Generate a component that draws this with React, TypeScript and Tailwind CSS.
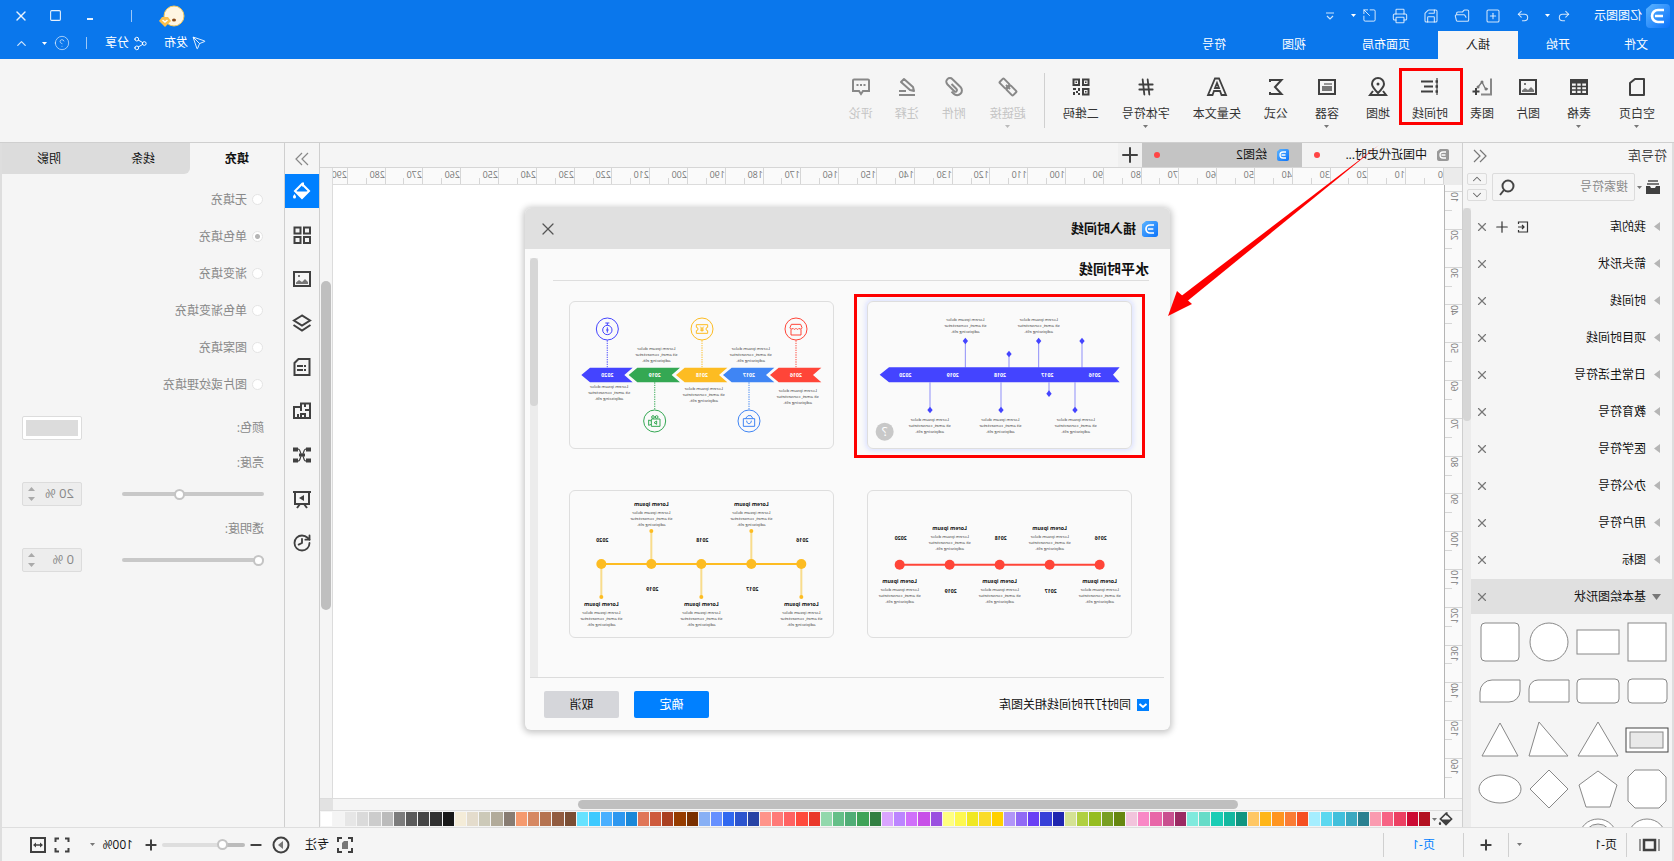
import { ReactNode } from 'react';
import { clsx } from 'clsx';
import {
  ChevronDown,
  ChevronUp,
  CircleHelp,
  FolderOpen,
  Hash,
  History,
  Minus,
  Plus,
  Printer,
  Redo2,
  Save,
  Send,
  Share2,
  Square,
  SquareArrowOutUpRight,
  SquarePlus,
  Undo2,
  X,
} from 'lucide-react';

interface IconProps {
  children: ReactNode;
  size?: string;
  viewBox?: string;
}

function Icon({ children, size = 'size-5', viewBox = '0 0 20 20' }: IconProps) {
  return (
    <svg
      className={size}
      viewBox={viewBox}
      fill="none"
      stroke="currentColor"
      strokeWidth="2"
      aria-hidden="true"
    >
      {children}
    </svg>
  );
}

function Caret({ className = 'text-[#777]' }: { className?: string }) {
  return (
    <svg className={clsx('h-[3px] w-[5px] shrink-0', className)} viewBox="0 0 5 3" fill="currentColor" aria-hidden="true">
      <path d="M0 0h5L2.5 3z" />
    </svg>
  );
}

function BrandMark({ tone, size }: { tone: 'blue' | 'gray'; size: string }) {
  return (
    <svg className={clsx('shrink-0', size)} viewBox="0 0 24 24" aria-hidden="true">
      <defs>
        <linearGradient id="brand" x1="1" y1="0" x2="0" y2="1">
          <stop offset="0" stopColor="#5cb4ff" />
          <stop offset="1" stopColor="#0a72fa" />
        </linearGradient>
      </defs>
      <path
        d="M4 0h14l6 5v15a4 4 0 0 1-4 4H4a4 4 0 0 1-4-4V4a4 4 0 0 1 4-4z"
        fill={tone === 'blue' ? 'url(#brand)' : '#989898'}
      />
      <path d="M6 6h6a6 6 0 0 1 0 12H6M7 12h8" fill="none" stroke="#fff" strokeWidth="2.6" />
    </svg>
  );
}

const DoubleChevron = ({ back }: { back?: boolean }) => (
  <Icon size="size-[14px]" viewBox="0 0 14 14">
    <path
      d={back ? 'M7 1L1 7l6 6M13 1L7 7l6 6' : 'M7 1l6 6-6 6M1 1l6 6-6 6'}
      strokeWidth="1.2"
    />
  </Icon>
);

const BucketIcon = ({ size = 'size-5' }: { size?: string }) => (
  <Icon size={size}>
    <path d="M9 1.5v4M3 10l7-7 7 7-7 7z" />
    <path d="M3 10.5h14l-7 7z" fill="currentColor" stroke="none" />
    <path d="M17.5 13c1 1.500 1.500 2 1.500 3a1.500 1.500 0 0 1-3 0c0-1 .5-1.500 1.500-3z" fill="currentColor" stroke="none" />
  </Icon>
);

const PictureIcon = () => (
  <Icon>
    <rect x="2" y="3" width="16" height="14" />
    <path d="M4 15v-2l3-3 3 3 3-2 3 2.500V15z" fill="#777" stroke="none" />
    <path d="M12 6h2v2h-2z" fill="#777" stroke="none" />
  </Icon>
);

// ---------------------------------------------------------------- title bar

const MENU_TABS = ['文件', '开始', '插入', '页面布局', '视图', '符号'];

function TitleBar() {
  return (
    <header className="flex h-[59px] shrink-0 justify-between bg-[#0a77ec] text-white">
      <div className="flex flex-col justify-between">
        <div className="flex h-[31px] items-center gap-1 pl-1">
          <BrandMark tone="blue" size="size-6" />
          <span className="mr-[19px]">亿图图示</span>
          <div className="flex items-center gap-[15px] text-white/80">
            <button className="flex items-center gap-[7px]" aria-label="撤销">
              <Undo2 size={14} strokeWidth={1.8} />
              <Caret className="text-white" />
            </button>
            <button aria-label="重做"><Redo2 size={14} strokeWidth={1.8} /></button>
            <button aria-label="新建"><SquarePlus size={16} strokeWidth={1.6} /></button>
            <button aria-label="打开"><FolderOpen size={16} strokeWidth={1.6} /></button>
            <button aria-label="保存"><Save size={16} strokeWidth={1.6} /></button>
            <button aria-label="打印"><Printer size={16} strokeWidth={1.6} /></button>
            <button className="flex items-center gap-[6px]" aria-label="导出">
              <SquareArrowOutUpRight size={15} strokeWidth={1.6} />
              <Caret className="text-white" />
            </button>
            <button aria-label="更多">
              <Icon size="size-3" viewBox="0 0 12 12">
                <path d="M2 3h8M3 6l3 3 3-3" strokeWidth="1.2" />
              </Icon>
            </button>
          </div>
        </div>
        <nav className="flex h-7">
          {MENU_TABS.map((tab) => (
            <button
              key={tab}
              className={clsx('px-7 first:px-[26px]', tab === '插入' && 'bg-[#f5f5f5] text-[#222]')}
            >
              {tab}
            </button>
          ))}
        </nav>
      </div>

      <div className="flex flex-col items-end">
        <div className="flex h-[31px] items-center pr-[13px] text-white/90">
          <svg className="mr-[26px] h-[22px] w-7" viewBox="0 0 28 22" aria-label="用户">
            <circle cx="12" cy="11" r="10" fill="#fff6e2" stroke="#f6c95c" />
            <ellipse cx="12" cy="15" rx="2" ry="1.5" fill="#8a4b1a" />
            <path d="M18 12h6l3 4-6 6-6-6z" fill="#fdc04b" />
            <path d="M18.5 15l2.500 2 2.500-2" fill="none" stroke="#fff" strokeWidth="1.5" />
          </svg>
          <span className="mr-[35px] h-3 w-px bg-white/60" />
          <button className="mr-[22px]" aria-label="最小化">
            <Icon size="size-3" viewBox="0 0 12 12"><path d="M3 9h6" /></Icon>
          </button>
          <button className="mr-5" aria-label="最大化">
            <Square size={13} strokeWidth={2} />
          </button>
          <button aria-label="关闭"><X size={16} strokeWidth={2} /></button>
        </div>
        <div className="flex h-6 items-center pr-[14px]">
          <button className="mr-4 flex items-center gap-1"><Send size={14} strokeWidth={1.5} />发布</button>
          <button className="mr-[18px] flex items-center gap-1"><Share2 size={15} strokeWidth={1.5} />分享</button>
          <span className="mr-4 h-3 w-px bg-white/60" />
          <button className="mr-[13px] flex items-center gap-[7px] text-white/60" aria-label="帮助">
            <CircleHelp size={16} strokeWidth={1.5} />
            <Caret className="text-white" />
          </button>
          <button className="text-white/80" aria-label="收起功能区"><ChevronUp size={15} strokeWidth={2} /></button>
        </div>
      </div>
    </header>
  );
}

// ------------------------------------------------------------------- ribbon

interface RibbonItem {
  label: string;
  icon: ReactNode;
  pad: string;
  menu?: boolean;
  marked?: boolean;
}

const RIBBON: RibbonItem[] = [
  {
    label: '空白页',
    pad: 'px-3',
    menu: true,
    icon: <Icon><path d="M3 2h9l5 4v12H3z" strokeLinejoin="round" /></Icon>,
  },
  {
    label: '表格',
    pad: 'px-4',
    menu: true,
    icon: (
      <Icon>
        <rect x="2" y="3" width="16" height="14" />
        <path d="M2 5h16" strokeWidth="3" />
        <path d="M2 9.5h16M2 13h16M7.5 6v11M12.5 6v11" strokeWidth="1.5" />
      </Icon>
    ),
  },
  { label: '图片', pad: 'px-[11px]', icon: <PictureIcon /> },
  {
    label: '图表',
    pad: 'px-[11px]',
    icon: (
      <Icon>
        <path d="M1 1.5v16h10" stroke="#888" />
        <path d="M4 12l3-1 3-6 4 5" strokeWidth="1.3" stroke="#777" />
        <circle cx="6" cy="12" r="1.5" fill="#777" stroke="none" />
        <circle cx="10" cy="5" r="1.5" fill="#777" stroke="none" />
        <circle cx="14" cy="10" r="1.5" fill="#777" stroke="none" />
        <path d="M16 11v7M12.5 14.5h7" />
      </Icon>
    ),
  },
  {
    label: '时间线',
    pad: 'px-[11px]',
    marked: true,
    icon: (
      <Icon>
        <path d="M3 1v17" strokeWidth="1.2" />
        <path d="M2 4.5h2.500M2 9.5h2.500M2 14.5h2.500" strokeWidth="2.5" />
        <path d="M7 4.5h12M7 9.5h9M7 14.5h12" />
      </Icon>
    ),
  },
  {
    label: '地图',
    pad: 'px-[11px]',
    icon: (
      <Icon>
        <path d="M10 16C6 12 4 10 4 7a6 6 0 0 1 12 0c0 3-2 5-6 9z" />
        <circle cx="10" cy="7" r="1.5" fill="currentColor" stroke="none" />
        <path d="M5 14l-3 4h16l-3-4" />
      </Icon>
    ),
  },
  {
    label: '容器',
    pad: 'px-4',
    menu: true,
    icon: (
      <Icon>
        <rect x="2" y="3" width="16" height="14" />
        <path d="M5 9h10v5H5z" fill="#777" stroke="none" />
        <path d="M5 7h8" stroke="#777" strokeWidth="1.5" />
      </Icon>
    ),
  },
  {
    label: '公式',
    pad: 'px-[11px]',
    icon: (
      <Icon>
        <path d="M16 5V3H4.500l6.500 7-6.500 7H16v-2" />
      </Icon>
    ),
  },
  {
    label: '矢量文本',
    pad: 'px-3',
    icon: (
      <Icon size="h-5 w-[22px]" viewBox="0 0 22 20">
        <path d="M9 1.5h4l7 16.500h-4.500l-1.500-4H8l-1.500 4H2zM11 6l-2 5h4z" strokeWidth="1.8" />
      </Icon>
    ),
  },
  { label: '字体符号', pad: 'px-[11px]', menu: true, icon: <Hash size={20} strokeWidth={2.2} /> },
  {
    label: '二维码',
    pad: 'px-3',
    icon: (
      <Icon>
        <path d="M2.5 2.5h5.500v5.500H2.500zM12 2.5h5.500v5.500H12zM2.5 12h5.500v5.500H2.500z" />
        <path
          d="M4.5 4.5h1.500V6H4.500zM14 4.5h1.500V6H14zM4.5 14h1.500v1.500H4.500zM11 11h2v3h-2zM15 11h3v2h-3zM13 14h2v2h-2zM11 16h2v2h-2zM16 15h2v3h-2z"
          fill="currentColor"
          stroke="none"
        />
      </Icon>
    ),
  },
];

const RIBBON_DISABLED: RibbonItem[] = [
  {
    label: '超链接',
    pad: 'px-3',
    menu: true,
    icon: (
      <Icon>
        <rect x="-4.5" y="-3" width="9" height="6" rx="1" transform="translate(6.5 13.5) rotate(-45)" />
        <rect x="-4.5" y="-3" width="9" height="6" rx="1" transform="translate(13.5 6.5) rotate(-45)" />
        <path d="M8 12l4-4" />
      </Icon>
    ),
  },
  {
    label: '附件',
    pad: 'px-3',
    icon: (
      <Icon>
        <path d="M12.5 7l-5 5a1.500 1.500 0 0 0 2.200 2.200l7-7a3.600 3.600 0 0 0-5.200-5L3.500 10a4.800 4.800 0 0 0 6.800 6.800l2.200-2.200" />
      </Icon>
    ),
  },
  {
    label: '注释',
    pad: 'px-[11px]',
    icon: (
      <Icon>
        <path d="M3 14l1-4 9-8 3 3-9 8zM2 18h16M11 14h7" strokeLinejoin="round" />
      </Icon>
    ),
  },
  {
    label: '评论',
    pad: 'px-[11px]',
    icon: (
      <Icon>
        <path d="M3 2.5h14a1 1 0 0 1 1 1V14h-6l-2 3-2-3H2V3.500a1 1 0 0 1 1-1z" />
        <path d="M5.5 8h2M9 8h2M12.5 8h2" />
      </Icon>
    ),
  },
];

function RibbonButton({ item, disabled }: { item: RibbonItem; disabled?: boolean }) {
  return (
    <button
      disabled={disabled}
      className={clsx(
        'relative flex flex-col items-center pt-[18px]',
        item.pad,
        disabled ? 'text-[#888]' : 'text-[#404040]'
      )}
    >
      {item.icon}
      <span className={clsx('mt-2 leading-[18px]', disabled ? 'text-[#c4c4c4]' : 'text-[#333]')}>{item.label}</span>
      {item.menu && <Caret className={clsx('mt-0.5', disabled ? 'text-[#bbb]' : 'text-[#777]')} />}
      {item.marked && <span className="absolute -right-0.5 -left-1 top-[9px] h-[57px] border-3 border-[#fe0000]" />}
    </button>
  );
}

function Ribbon() {
  return (
    <div className="flex h-[84px] shrink-0 items-stretch border-b border-[#cfcfcf] bg-[#f5f5f5] pl-[7px]">
      {RIBBON.map((item) => (
        <RibbonButton key={item.label} item={item} />
      ))}
      <span className="mx-1.5 my-3.5 w-px bg-[#d0d0d0]" />
      {RIBBON_DISABLED.map((item) => (
        <RibbonButton key={item.label} item={item} disabled />
      ))}
    </div>
  );
}

// ------------------------------------------------------------ symbol library

const LIBRARIES = [
  '我的库', '箭头形状', '时间线', '项目时间线', '日常生活符号',
  '教育符号', '医学符号', '办公符号', '用户符号', '图标',
];

// every shape is drawn in a 46 x 46 box
const SHAPES: ReactNode[] = [
  <rect x="4" y="4" width="38" height="38" />,
  <rect x="2" y="11" width="42" height="24" />,
  <circle cx="23" cy="23" r="19" />,
  <rect x="4" y="4" width="38" height="38" rx="4" />,
  <rect x="3" y="11" width="39" height="24" rx="4" />,
  <rect x="2" y="11" width="42" height="24" rx="4" />,
  <path d="M3 12h31a9 9 0 0 1 9 9v13H3z" />,
  <path d="M3 12h28a12 12 0 0 1 12 12v10H14A11 11 0 0 1 3 23z" />,
  <>
    <rect x="2" y="11" width="42" height="24" stroke="#444" />
    <rect x="7" y="15" width="33" height="16" fill="#e9e9e9" />
  </>,
  <path d="M23 5l20 34H3z" />,
  <path d="M33 5l10 34H4z" />,
  <path d="M23 6l18 33H5z" />,
  <path d="M11 4h24l7 7v24l-7 7H11l-7-7V11z" />,
  <path d="M23 5l19 14-7 22H11L4 19z" />,
  <path d="M23 4l19 19-19 19L4 23z" />,
  <ellipse cx="23" cy="23" rx="21" ry="14" />,
  <circle cx="23" cy="23" r="19" />,
  <>
    <circle cx="23" cy="23" r="19" />
    <circle cx="23" cy="23" r="14" fill="#e9e9e9" />
  </>,
];

function SymbolPanel() {
  return (
    <aside className="flex w-[210px] shrink-0 flex-col border-r border-[#cfcfcf]">
      <div className="flex h-[26px] items-center justify-between pr-2.5 pl-[5px] text-[13px] text-[#444]">
        符号库
        <button className="text-[#777]" aria-label="收起符号库"><DoubleChevron back /></button>
      </div>
      <div className="flex items-center pt-1 pr-1 pl-3">
        <button className="flex items-center gap-1 text-[#404040]" aria-label="符号库菜单">
          <Icon size="size-[14px]" viewBox="0 0 14 14">
            <path d="M2 1h10M1 4h12" stroke="#777" />
            <path d="M0 6h4l1 2h4l1-2h4v8H0z" fill="currentColor" stroke="none" />
          </Icon>
          <Caret />
        </button>
        <label className="mr-[5px] ml-0.5 flex h-7 flex-1 items-center rounded-xs border border-[#dcdcdc] px-1.5">
          <input className="w-0 flex-1 outline-none placeholder:text-[#8a8a8a]" placeholder="搜索符号" aria-label="搜索符号" />
          <Icon size="size-[17px]" viewBox="0 0 17 17">
            <g stroke="#444"><circle cx="8" cy="7" r="5.5" /><path d="M12 11l4 5" /></g>
          </Icon>
        </label>
        <div className="flex flex-col gap-1 text-[#666]">
          <button className="flex h-3 w-5 items-center justify-center rounded-xs border border-[#dcdcdc]" aria-label="上一个">
            <ChevronUp size={14} strokeWidth={1.8} />
          </button>
          <button className="flex h-3 w-5 items-center justify-center rounded-xs border border-[#dcdcdc]" aria-label="下一个">
            <ChevronDown size={14} strokeWidth={1.8} />
          </button>
        </div>
      </div>

      <div className="mt-[7px] flex min-h-0 flex-1">
        <div className="min-w-0 flex-1 overflow-hidden">
          <ul>
            {LIBRARIES.map((name) => (
              <li key={name} className="flex h-[37px] items-center pr-1 pl-3 text-[#111]">
                <svg className="mr-2 h-[9px] w-1.5" viewBox="0 0 6 9" fill="#b5b5b5" aria-hidden="true">
                  <path d="M0 0l6 4.500L0 9z" />
                </svg>
                <span className="flex-1">{name}</span>
                {name === '我的库' && (
                  <span className="flex items-center gap-1.5 pr-1 text-[#333]">
                    <button aria-label="导入">
                      <Icon size="size-3" viewBox="0 0 12 12">
                        <path d="M10.5 3V1h-9v10h9V9M11 6H5M7 4L5 6l2 2" strokeWidth="1.2" />
                      </Icon>
                    </button>
                    <button aria-label="添加"><Plus size={18} strokeWidth={1.6} /></button>
                  </span>
                )}
                <button className="text-[#777]" aria-label={'关闭' + name}><X size={14} strokeWidth={2} /></button>
              </li>
            ))}
          </ul>
          <div className="mt-px flex h-[35px] items-center bg-[#e0e0e0] pr-1 pl-[11px] text-[#111]">
            <svg className="mr-1.5 h-1.5 w-[9px]" viewBox="0 0 9 6" fill="#777" aria-hidden="true">
              <path d="M0 0h9L4.500 6z" />
            </svg>
            <span className="flex-1">基本绘图形状</span>
            <button className="text-[#777]" aria-label="关闭基本绘图形状"><X size={14} strokeWidth={2} /></button>
          </div>
          <div className="grid grid-cols-4 pt-[5px] pr-1">
            {SHAPES.map((shape, i) => (
              <svg key={i} className="mx-auto mb-[3px] size-[46px]" viewBox="0 0 46 46" fill="#fff" stroke="#888">
                {shape}
              </svg>
            ))}
          </div>
        </div>
        <div className="w-2 shrink-0 bg-[#ececec]">
          <div className="h-[213px] rounded-full bg-[#d6d6d6]" />
        </div>
      </div>
    </aside>
  );
}

// ------------------------------------------------------------------- canvas

const RULER_STEP = 37.8;

function TopRuler() {
  return (
    <svg className="h-[17px] min-w-0 flex-1 border-b border-[#dcdcdc] bg-[#fafafa] text-[9px]" aria-hidden="true">
      {Array.from({ length: 30 }, (_, i) => {
        const x = Math.round(i * RULER_STEP);
        const half = Math.round((i + 0.5) * RULER_STEP);
        return (
          <g key={i}>
            <path d={`M${x + 0.5} 0v17M${half + 0.5} 10v7`} stroke="#d6d6d6" />
            <text x={x + 1} y="10" fill="#777">{i * 10}</text>
          </g>
        );
      })}
    </svg>
  );
}

function SideRuler() {
  return (
    <svg className="w-[18px] shrink-0 border-r border-[#b5b5b5] bg-[#fafafa] text-[9px]" aria-hidden="true">
      {Array.from({ length: 16 }, (_, i) => {
        const y = 6 + Math.round(i * RULER_STEP);
        const half = 6 + Math.round((i + 0.5) * RULER_STEP);
        return (
          <g key={i}>
            <path d={`M0 ${y + 0.5}h18M10 ${half + 0.5}h8`} stroke="#d6d6d6" />
            <text textAnchor="end" transform={`translate(11 ${y + 1}) rotate(-90)`} fill="#777">
              {(i + 1) * 10}
            </text>
          </g>
        );
      })}
    </svg>
  );
}

const PALETTE = [
  '#b31020', '#cc0a33', '#ec4062', '#f76384', '#fa9bb0',
  '#2a8090', '#3aa8c0', '#42c0dc', '#5cd8f0', '#a5eeff',
  '#f55022', '#fa7c35', '#ff9520', '#ffb618', '#ffc764',
  '#109580', '#14b8a0', '#1acdb5', '#66dcc8', '#80eadd',
  '#9b2a62', '#c9508f', '#e866a8', '#f988c6', '#f2c4dc',
  '#66870f', '#789f22', '#95bd20', '#b0d040', '#d4e294',
  '#1f26b0', '#3740d8', '#6a40f5', '#916af5', '#b195f8',
  '#ffd000', '#fadc2a', '#f0e823', '#fdf850', '#ffff80',
  '#9a50e0', '#c850e8', '#d070fa', '#bc85ff', '#daa5ff',
  '#328042', '#3fa358', '#50ad76', '#65bf88', '#92d8ac',
  '#ea382a', '#ff4a3c', '#ff6262', '#ff7a78', '#ff948a',
  '#2843a5', '#2c54ce', '#3068f0', '#6690ff', '#88b0f5',
  '#7a3000', '#963c00', '#aa4022', '#ce5a3c', '#e07658',
  '#1a88d8', '#2e98f0', '#4ab0ff', '#3ecaff', '#66e2ff',
  '#7a4e34', '#925c40', '#b57350', '#d68862', '#f59a6e',
  '#887c72', '#b2ab9a', '#ccc9b8', '#e4dccc', '#f4ecd8',
  '#181818', '#303030', '#454545', '#5a5a5a', '#7c7c7c', '#bbbbbb',
  '#cccccc', '#dadada', '#e6e6e6', '#f4f4f4', '#ffffff',
];

function Workspace() {
  return (
    <main className="relative flex min-w-0 flex-1 flex-col">
      <div className="flex h-[25px] shrink-0 border-b border-[#d6d6d6] text-[#111]">
        <button className="flex w-40 items-center bg-[#f3f3f3] pr-3 pl-[13px]">
          <BrandMark tone="gray" size="size-3" />
          <span className="ml-2.5 flex-1 text-left">中国近代史时...</span>
          <span className="size-1.5 rounded-full bg-[#ff4545]" />
        </button>
        <button className="flex w-40 items-center bg-[#c4c4c4] pr-3 pl-[13px]">
          <BrandMark tone="blue" size="size-3" />
          <span className="ml-2.5 flex-1 text-left">绘图2</span>
          <span className="size-1.5 rounded-full bg-[#ff4545]" />
        </button>
        <button className="flex w-6 items-center justify-center bg-[#f0f0f0] text-[#404040]" aria-label="新建页签">
          <Plus size={24} strokeWidth={2} />
        </button>
      </div>

      <div className="flex min-h-0 flex-1">
        <div className="flex min-w-0 flex-1 flex-col">
          <div className="flex h-[17px] shrink-0">
            <div className="w-[18px] bg-[#ebebeb]" />
            <TopRuler />
          </div>
          <div className="flex min-h-0 flex-1">
            <SideRuler />
            <div className="flex-1 bg-white" />
          </div>
        </div>
        <div className="w-[13px] shrink-0 border-l border-[#dcdcdc] px-px pt-[113px]">
          <div className="h-[329px] rounded-full bg-[#bfbfbf]" />
        </div>
      </div>

      <div className="flex h-[13px] shrink-0 border-y border-[#dcdcdc]">
        <div className="flex-1 py-px pl-[224px]">
          <div className="h-[9px] w-[660px] rounded-full bg-[#bfbfbf]" />
        </div>
        <div className="w-[13px] bg-[#e2e2e2]" />
      </div>

      <div className="flex h-4 shrink-0 items-center pl-2 text-[#404040]">
        <button className="mr-px flex w-[23px] items-center gap-px" aria-label="填充颜色">
          <BucketIcon size="size-4" />
          <Caret />
        </button>
        <div className="flex flex-1 gap-px">
          {PALETTE.map((color) => (
            <span key={color} className="h-[14px] flex-1" style={{ backgroundColor: color }} />
          ))}
        </div>
      </div>

      <TimelineDialog />

      {/* callout arrow from the ribbon item to the dialog */}
      <svg className="pointer-events-none absolute top-0 left-[82px] h-[180px] w-[214px]" viewBox="0 0 214 180" fill="#fe0000" aria-hidden="true">
        <path d="M188 161l24 12-9-25z" />
        <path d="M1 2l194 158 5-6z" />
      </svg>
    </main>
  );
}

// ------------------------------------------------------------ timeline dialog

const YEARS = ['2016', '2017', '2018', '2019', '2020'];

function Lorem({ x, y, title }: { x: number; y: number; title?: boolean }) {
  return (
    <g textAnchor="middle" fill="#333" fontSize="13">
      {title && (
        <text x={x} y={y - 20} fontSize="16" fontWeight="700" fill="#111">Lorem ipsum</text>
      )}
      <text x={x} y={y + 4}>Lorem ipsum dolor</text>
      <text x={x} y={y + 22}>sit amet, consectetur</text>
      <text x={x} y={y + 40}>adipiscing elit.</text>
    </g>
  );
}

function Stem({ x, from, to }: { x: number; from: number; to: number }) {
  return (
    <g fill="#4444ff">
      <path d={`M${x} ${from}V${to}`} stroke="#8f8ff8" strokeWidth="3" />
      <path d={`M${x} ${to - 10}l8 10-8 10-8-10z`} />
    </g>
  );
}

function ArrowTimeline() {
  return (
    <svg viewBox="0 0 795 444" aria-hidden="true">
      <Stem x={150} from={200} to={120} />
      <Stem x={280} from={200} to={120} />
      <Stem x={369} from={200} to={159} />
      <Stem x={500} from={200} to={120} />
      <Stem x={171} from={244} to={327} />
      <Stem x={249} from={244} to={278} />
      <Stem x={393} from={244} to={327} />
      <Stem x={606} from={244} to={327} />
      <path d="M37 199h692l28 22-28 23H37l20-23z" fill="#4444ff" />
      {YEARS.map((year, i) => (
        <text key={year} x={112 + i * 142} y="228" fontSize="16" fontWeight="700" fill="#fff" textAnchor="middle">
          {year}
        </text>
      ))}
      <Lorem x={280} y={56} />
      <Lorem x={500} y={56} />
      <Lorem x={169} y={356} />
      <Lorem x={395} y={356} />
      <Lorem x={607} y={356} />
      <circle cx="742" cy="392" r="27" fill="#c8c8c8" />
      <text x="742" y="406" fontSize="40" fill="#fff" textAnchor="middle">?</text>
    </svg>
  );
}

const RIBBON_STEPS = [
  { x: 38, color: '#ff4538', up: true, textY: 268 },
  { x: 179, color: '#3f85f4', up: false, textY: 142 },
  { x: 320, color: '#fdbc22', up: true, textY: 262 },
  { x: 462, color: '#34a853', up: false, textY: 142 },
  { x: 604, color: '#4444ff', up: true, textY: 258 },
];

// drawn round the centre of the badge
const BADGES = [
  <path d="M-14-14h28l4 10c0 4-6 6-9 2-3 4-6 4-9 0-3 4-6 4-9 0-3 4-9 2-9-2zM-15 1v17h30V1" />,
  <path d="M-17-7h34v23h-34zM-12-7l6-9h9l8 9M-7-1c0 12 14 12 14 0" />,
  <path d="M-17-13h34v8a5 5 0 0 0 0 10v8h-34V5a5 5 0 0 0 0-10zM-5-7l5 6 5-6M0-1V8M-5 0H5M-5 4H5" />,
  <path d="M-16-6h26v22h-26zM10 0l8-3v16l-8-3M-10-12a4 4 0 1 0 8 0 4 4 0 1 0-8 0M1-12a4 4 0 1 0 8 0 4 4 0 1 0-8 0M-6 0l8 5-8 5z" />,
  <path d="M-14 3a14 14 0 1 0 28 0 14 14 0 1 0-28 0M-6-18H6M0-18v7M0-5v16M-4 3H4" />,
];

function ChevronTimeline() {
  return (
    <svg viewBox="0 0 795 444" aria-hidden="true">
      {RIBBON_STEPS.map((step, i) => {
        const cx = step.x + 76;
        const cy = step.up ? 84 : 360;
        return (
          <g key={step.color}>
            <path
              d={step.up ? `M${cx} 118V200` : `M${cx} 244v82`}
              stroke={step.color}
              strokeWidth="4"
              strokeDasharray="4 3"
              opacity="0.7"
            />
            <g fill="none" stroke={step.color} strokeWidth="3" transform={`translate(${cx} ${cy})`}>
              <circle r="33" />
              {BADGES[i]}
            </g>
            <path d={`M${step.x} 200h128l26 22-26 22H${step.x}l25-22z`} fill={step.color} />
            <text x={cx} y="228" fontSize="16" fontWeight="700" fill="#fff" textAnchor="middle">{YEARS[i]}</text>
            <Lorem x={cx - 5} y={step.textY} />
          </g>
        );
      })}
    </svg>
  );
}

function DotTimeline() {
  return (
    <svg viewBox="0 0 795 444" aria-hidden="true">
      <path d="M97 224h600" stroke="#ff4538" strokeWidth="6" />
      {YEARS.map((year, i) => {
        const x = 97 + i * 150;
        const below = i % 2 === 0;
        return (
          <g key={year}>
            <circle cx={x} cy="224" r="15" fill="#ff4538" />
            <text x={x - 3} y={below ? 149 : 308} fontSize="16" fontWeight="700" fill="#111" textAnchor="middle">{year}</text>
            <Lorem x={x} y={below ? 298 : 139} title />
          </g>
        );
      })}
    </svg>
  );
}

function StemTimeline() {
  return (
    <svg viewBox="0 0 795 444" aria-hidden="true">
      <path d="M98 222h600" stroke="#fdbc22" strokeWidth="6" />
      {YEARS.map((year, i) => {
        const x = 98 + i * 150;
        const below = i % 2 === 0;
        const end = below ? 321 : 123;
        return (
          <g key={year}>
            <path d={`M${x} 222V${end}`} stroke="#f8dc8c" strokeWidth="6" />
            <circle cx={x} cy={end} r="6" fill="#fdbc22" />
            <circle cx={x} cy="222" r="15" fill="#fdbc22" />
            <text x={x - 3} y={below ? 155 : 302} fontSize="16" fontWeight="700" fill="#111" textAnchor="middle">{year}</text>
            <Lorem x={x} y={below ? 369 : 69} title />
          </g>
        );
      })}
    </svg>
  );
}

function TimelineDialog() {
  const card = 'h-[148px] rounded-md bg-[#fafafa] outline outline-1 -outline-offset-1 outline-[#dedede]';
  return (
    <section
      role="dialog"
      aria-label="插入时间线"
      className="absolute top-[65px] left-[292px] flex w-[645px] flex-col overflow-hidden rounded-md bg-[#fafafa] text-[#111] shadow-[0_1px_6px_2px_#00000038]"
    >
      <div className="flex h-[41px] items-center bg-[#e0e0e0] pr-[13px] pl-3">
        <BrandMark tone="blue" size="size-4" />
        <h2 className="ml-1.5 flex-1 text-[13px] font-bold">插入时间线</h2>
        <button className="text-[#555]" aria-label="关闭"><X size={20} strokeWidth={1.5} /></button>
      </div>

      <div className="mr-[5px] ml-1.5 flex border-b border-[#dcdcdc] pt-[9px]">
        <div className="flex-1 pr-[15px] pl-[15px]">
          <h3 className="border-b border-[#dedede] text-[14px] leading-[22px] font-bold">水平时间线</h3>
          <div className="grid grid-cols-2 gap-x-[33px] gap-y-[41px] pt-5 pr-4 pb-[39px] pl-[17px]">
            <button className={clsx(card, 'relative shadow-[0_0_4px_2px_#dfe4ff]')} aria-label="箭头时间线">
              <ArrowTimeline />
              <span className="absolute -inset-x-[13px] -top-[7px] -bottom-[9px] border-3 border-[#fe0000]" />
            </button>
            <button className={card} aria-label="彩带时间线"><ChevronTimeline /></button>
            <button className={card} aria-label="圆点时间线"><DotTimeline /></button>
            <button className={card} aria-label="分支时间线"><StemTimeline /></button>
          </div>
        </div>
        <div className="w-2 bg-[#ececec]">
          <div className="h-[148px] rounded-full bg-[#d6d6d6]" />
        </div>
      </div>

      <div className="flex h-[52px] items-center pt-px pr-[19px] pl-[21px]">
        <label className="flex flex-1 items-center gap-1.5">
          <span className="grid size-3">
            <input type="checkbox" defaultChecked className="col-start-1 row-start-1 size-3 appearance-none bg-[#0080ff]" />
            <svg className="pointer-events-none col-start-1 row-start-1 size-3" viewBox="0 0 12 12" fill="none" stroke="#fff" strokeWidth="2">
              <path d="M2.5 5l3.500 3 3.500-3" />
            </svg>
          </span>
          同时打开时间线相关图库
        </label>
        <button className="mr-[15px] h-[27px] w-[75px] rounded-xs bg-[#0080ff] text-white">确定</button>
        <button className="h-[27px] w-[75px] rounded-xs bg-[#d5d6da]">取消</button>
      </div>
    </section>
  );
}

// --------------------------------------------------------------- right panels

const TOOL_ICONS: { label: string; icon: ReactNode }[] = [
  { label: '填充', icon: <BucketIcon /> },
  {
    label: '符号',
    icon: (
      <Icon>
        <path d="M2 2.5h6v6H2zM11.5 2.5h6v6h-6zM2 12h6v6H2zM11.5 12h6v6h-6z" />
      </Icon>
    ),
  },
  { label: '图片', icon: <PictureIcon /> },
  {
    label: '图层',
    icon: (
      <Icon>
        <path d="M10 2.5l8 5-8 5-8-5zM1.5 12l8.500 5.500 8.500-5.500" />
      </Icon>
    ),
  },
  {
    label: '页面',
    icon: (
      <Icon>
        <path d="M2.5 2h11l4 4v12h-15zM6 9h2M6 13h2M9 9h6M9 13h6" />
      </Icon>
    ),
  },
  {
    label: '平面图',
    icon: (
      <Icon>
        <path d="M2 2.5h9v3.500h7v11H2z" />
        <path d="M7 3v3M2 9h5M11 6v4M7 16v-3h4v4M14 16v-3" />
      </Icon>
    ),
  },
  {
    label: '思维导图',
    icon: (
      <Icon>
        <path d="M3 4h3c3 0 2 6 4 6s1-6 4-6h3M3 16h3c3 0 2-6 4-6s1 6 4 6h3" strokeWidth="1.2" />
        <path d="M1 2.5h5v4H1zM14 2.5h5v4h-5zM1 13.5h5v4H1zM14 13.5h5v4h-5zM7 8.5h6v3H7z" fill="currentColor" stroke="none" />
      </Icon>
    ),
  },
  {
    label: '演示',
    icon: (
      <Icon>
        <path d="M1 3h18M3 3v12h14V3M8 15l-3 4M12 15l3 4" />
        <path d="M8 6l5 3-5 3z" fill="currentColor" stroke="none" />
      </Icon>
    ),
  },
  { label: '历史', icon: <History size={20} strokeWidth={2.2} /> },
];

function ToolStrip() {
  return (
    <aside className="flex w-9 shrink-0 flex-col items-center border-x border-[#cfcfcf] text-[#404040]">
      <button className="flex h-[31px] items-center text-[#888]" aria-label="收起面板">
        <DoubleChevron />
      </button>
      <div className="flex flex-col gap-2.5">
        {TOOL_ICONS.map((tool, i) => (
          <button
            key={tool.label}
            aria-label={tool.label}
            className={clsx('flex size-[34px] items-center justify-center', i === 0 && 'bg-[#0080ff] text-white')}
          >
            {tool.icon}
          </button>
        ))}
      </div>
    </aside>
  );
}

const FILL_MODES = ['无填充', '单色填充', '渐变填充', '单色渐变填充', '图案填充', '图片或纹理填充'];

const RANGE =
  'h-1 appearance-none rounded-full [&::-webkit-slider-thumb]:size-[11px] [&::-webkit-slider-thumb]:appearance-none [&::-webkit-slider-thumb]:rounded-full [&::-webkit-slider-thumb]:border-2 [&::-webkit-slider-thumb]:border-[#c4c4c4] [&::-webkit-slider-thumb]:bg-white';

function SliderRow({ id, label, value, text }: { id: string; label: string; value: number; text: string }) {
  return (
    <div>
      <label htmlFor={id} className="block leading-5">{label}</label>
      <div className="mt-[9px] flex items-center justify-between">
        <input id={id} type="range" defaultValue={value} className={clsx(RANGE, 'w-[142px] bg-[#c8c8c8]')} />
        <div className="flex h-6 w-[60px] items-center rounded-xs border border-[#dcdcdc] bg-[#ededed] pr-[5px] pl-[7px]">
          <input className="w-0 flex-1 text-[13px] outline-none" defaultValue={text} aria-label={label} />
          <span className="flex flex-col gap-1.5 text-[#aaa]">
            <button aria-label="增加">
              <svg className="block h-1 w-[7px]" viewBox="0 0 7 4" fill="currentColor"><path d="M0 4h7L3.500 0z" /></svg>
            </button>
            <button aria-label="减少">
              <svg className="block h-1 w-[7px]" viewBox="0 0 7 4" fill="currentColor"><path d="M0 0h7L3.500 4z" /></svg>
            </button>
          </span>
        </div>
      </div>
    </div>
  );
}

function FillPanel() {
  return (
    <aside className="w-[282px] shrink-0 text-[#888]">
      <div className="grid h-[31px] grid-cols-3 text-[#111]">
        <button className="font-bold">填充</button>
        <div className="col-span-2 grid grid-cols-2 rounded-bl-md bg-[#dcdcdc]">
          <button>线条</button>
          <button>阴影</button>
        </div>
      </div>
      <div className="pt-[7px] pr-5 pl-5">
        {FILL_MODES.map((mode) => (
          <label key={mode} className="flex h-[37px] items-center gap-[5px]">
            <input
              type="radio"
              name="fill"
              defaultChecked={mode === '单色填充'}
              className="ml-px size-[11px] appearance-none rounded-full border border-[#e4e4e4] bg-white checked:bg-[radial-gradient(circle,#b5b5b5_2px,#fff_3px)]"
            />
            {mode}
          </label>
        ))}
        <div className="my-[13px] flex h-6 items-center justify-between">
          颜色:
          <button className="h-6 w-[60px] rounded-xs border border-[#dcdcdc] bg-white p-[3px]" aria-label="选择颜色">
            <span className="block h-full bg-[#dcdcdc]" />
          </button>
        </div>
        <div className="flex flex-col gap-[13px]">
          <SliderRow id="brightness" label="亮度:" value={60} text="20 %" />
          <SliderRow id="opacity" label="透明度:" value={0} text="0 %" />
        </div>
      </div>
    </aside>
  );
}

// --------------------------------------------------------------- status bar

function StatusBar() {
  return (
    <footer className="flex h-[34px] shrink-0 items-center justify-between border-x-2 border-t border-[#dedede] bg-[#f5f5f5] text-[#404040]">
      <div className="flex h-6 items-center">
        <button className="px-3" aria-label="页面视图">
          <Icon size="h-3.5 w-[21px]" viewBox="0 0 21 14">
            <rect x="5" y="2" width="11" height="10" strokeWidth="2.5" />
            <path d="M1 1v12M20 1v12" strokeWidth="1.5" stroke="#777" />
          </Icon>
        </button>
        <label className="flex h-6 w-[119px] items-center border-x border-[#d0d0d0] pr-2 pl-[9px]">
          <select className="flex-1 appearance-none text-[#111] outline-none" aria-label="页面">
            <option>页-1</option>
          </select>
          <Caret />
        </label>
        <button className="flex w-11 justify-center" aria-label="添加页"><Plus size={16} strokeWidth={3} /></button>
        <button className="h-6 w-[81px] border-x border-[#d0d0d0] text-[#0080ff]">页-1</button>
      </div>

      <div className="flex items-center pr-7">
        <button className="mr-[15px] flex items-center gap-2 text-[#111]">
          <Icon size="size-4" viewBox="0 0 16 16">
            <path d="M1 5V1h4M11 1h4v4M15 11v4h-4M5 15H1v-4" stroke="#404040" />
            <path d="M5 4h4l2 2v6H5z" fill="#777" stroke="none" />
          </Icon>
          专注
        </button>
        <button className="mr-2" aria-label="播放">
          <Icon size="size-[18px]" viewBox="0 0 18 18">
            <circle cx="9" cy="9" r="7.5" />
            <path d="M7 5l5 4-5 4z" fill="#777" stroke="none" />
          </Icon>
        </button>
        <button className="mr-[3px]" aria-label="缩小"><Minus size={16} strokeWidth={3} /></button>
        <input
          type="range"
          defaultValue={23}
          aria-label="缩放"
          className={clsx(RANGE, 'w-[83px] bg-[linear-gradient(to_right,#bbb_23%,#dedede_23%)]')}
        />
        <button className="mr-2.5 ml-[3px]" aria-label="放大"><Plus size={16} strokeWidth={3} /></button>
        <label className="mr-5 flex items-center gap-[7px]">
          <select className="w-[31px] appearance-none text-[#111] outline-none" aria-label="缩放比例">
            <option>100%</option>
          </select>
          <Caret />
        </label>
        <button className="mr-2" aria-label="全屏">
          <Icon size="size-4" viewBox="0 0 16 16">
            <path d="M1.5 5V1.500H5M11 1.5h3.500V5M14.5 11v3.500H11M5 14.5H1.500V11" />
          </Icon>
        </button>
        <button aria-label="适合宽度">
          <Icon size="size-4" viewBox="0 0 16 16">
            <rect x="1" y="1" width="14" height="14" />
            <path d="M5 8h6" strokeWidth="1.5" />
            <path d="M3 8l3-2.500v5zM13 8l-3-2.500v5z" fill="currentColor" stroke="none" />
          </Icon>
        </button>
      </div>
    </footer>
  );
}

export default function App() {
  return (
    // the whole window is shown flipped left to right
    <div className="flex h-screen -scale-x-100 flex-col overflow-hidden bg-[#f5f5f5] font-['Open_Sans','Noto_Sans_CJK_SC',sans-serif] text-xs">
      <TitleBar />
      <Ribbon />
      <div className="flex min-h-0 flex-1 border-x-2 border-[#dedede]">
        <SymbolPanel />
        <Workspace />
        <ToolStrip />
        <FillPanel />
      </div>
      <StatusBar />
    </div>
  );
}
